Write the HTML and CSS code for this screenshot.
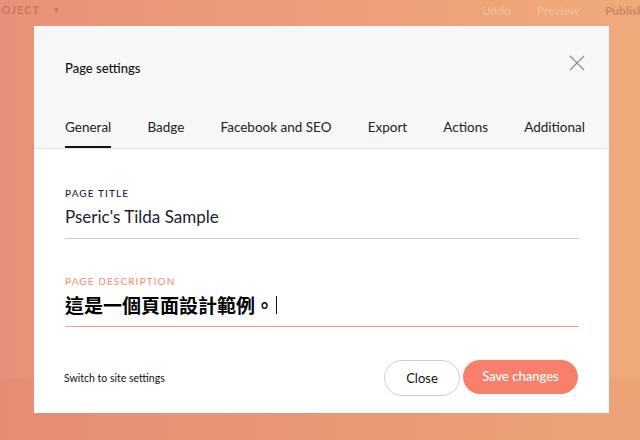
FILE: index.html
```html
<!DOCTYPE html>
<html lang="en">
<head>
<meta charset="utf-8">
<title>Page settings</title>
<link rel="stylesheet" href="styles.css">
</head>
<body>
<div class="topbar">
  <div class="tb-left"><span class="project">PROJECT</span><span class="caret">▾</span></div>
  <div class="tb-right"><span class="undo">Undo</span><span class="preview">Preview</span><span class="publish">Publish</span></div>
</div>
<div class="modal">
  <div class="modal-head">
    <div class="title-row">
      <div class="title">Page settings</div>
      <svg class="close-x" width="16" height="16" viewBox="0 0 16 16"><path d="M1 1L15 15M15 1L1 15" stroke="#8a8a8a" stroke-width="1.1" fill="none"/></svg>
    </div>
    <div class="tabs">
      <div class="tab active">General</div>
      <div class="tab">Badge</div>
      <div class="tab">Facebook and SEO</div>
      <div class="tab">Export</div>
      <div class="tab">Actions</div>
      <div class="tab">Additional</div>
    </div>
  </div>
  <div class="modal-body">
    <div class="field">
      <div class="label">PAGE TITLE</div>
      <div class="input">Pseric's Tilda Sample</div>
    </div>
    <div class="field focus">
      <div class="label">PAGE DESCRIPTION</div>
      <div class="input cjk">這是一個頁面設計範例。<span class="cursor"></span></div>
    </div>
  </div>
  <div class="modal-foot">
    <div class="switch">Switch to site settings</div>
    <div class="buttons">
      <div class="btn btn-close">Close</div>
      <div class="btn btn-save">Save changes</div>
    </div>
  </div>
</div>
</body>
</html>
```
FILE: styles.css
```css
html, body {
  margin: 0;
  padding: 0;
}
body {
  width: 640px;
  height: 440px;
  overflow: hidden;
  font-family: Lato, "Noto Sans", sans-serif;
  background:
    linear-gradient(to bottom, rgba(0,0,0,0) 378px, rgba(170,50,30,0.05) 378px),
    linear-gradient(to right, #e8917a 0%, #eda07b 60%, #f0aa7b 100%);
}
.topbar {
  height: 26px;
  display: flex;
  justify-content: space-between;
  align-items: flex-start;
  padding-top: 3px;
  box-sizing: border-box;
  font-size: 11px;
}
.tb-left {
  display: flex;
  align-items: center;
  margin-left: -14px;
  color: rgba(170,80,60,0.45);
  font-weight: 700;
  letter-spacing: 1px;
}
.caret {
  margin-left: 14px;
  font-size: 9px;
}
.tb-right {
  display: flex;
  gap: 26px;
  margin-right: -4px;
}
.undo, .preview {
  color: rgba(255,225,200,0.45);
  font-size: 12px;
}
.publish {
  color: rgba(150,80,55,0.4);
  font-weight: 700;
  font-size: 12px;
}
.modal {
  margin-left: 34px;
  width: 575px;
  height: 387px;
  background: #fff;
  display: flex;
  flex-direction: column;
}
.modal-head {
  background: #f7f7f7;
  border-bottom: 1px solid #e6e6e6;
  padding: 32px 24px 0 31px;
}
.title-row {
  display: flex;
  justify-content: space-between;
  align-items: flex-start;
  height: 20px;
}
.title {
  font-size: 13px;
  line-height: 20px;
  font-weight: 500;
  color: #111;
}
.close-x {
  margin-top: -3px;
}
.tabs {
  margin-top: 39px;
  display: flex;
  justify-content: space-between;
}
.tab {
  font-size: 13.5px;
  line-height: 20px;
  padding-bottom: 9px;
  border-bottom: 2px solid transparent;
  color: #222;
  font-weight: 400;
}
.tab.active {
  border-bottom-color: #111;
}
.modal-body {
  padding: 37px 30px 0 31px;
  display: flex;
  flex-direction: column;
  gap: 35px;
}
.field {
  display: flex;
  flex-direction: column;
}
.label {
  font-size: 10px;
  line-height: 14px;
  letter-spacing: 1.1px;
  color: #1d1d3a;
  font-weight: 500;
}
.field.focus .label {
  color: #f7907a;
}
.input {
  margin-top: 5px;
  font-size: 17px;
  line-height: 24px;
  font-weight: 400;
  color: #1c1c30;
  padding-bottom: 9px;
  border-bottom: 1px solid #c9c9c9;
}
.input.cjk {
  margin-top: 4px;
  font-family: "Noto Sans CJK TC", "Noto Sans CJK SC", sans-serif;
  font-size: 19px;
  line-height: 26px;
  font-weight: 700;
  color: #000;
  padding-bottom: 8px;
  border-bottom-color: #f59e84;
  display: flex;
  align-items: center;
}
.cursor {
  display: inline-block;
  width: 1px;
  height: 18px;
  background: #111;
  margin-left: 2px;
}
.modal-foot {
  margin-top: 33px;
  padding: 0 31px 0 30px;
  display: flex;
  justify-content: space-between;
  align-items: center;
}
.switch {
  font-size: 10.5px;
  color: #111;
}
.buttons {
  display: flex;
  gap: 3px;
  align-items: flex-start;
}
.btn {
  display: flex;
  align-items: center;
  justify-content: center;
  box-sizing: border-box;
  font-size: 13px;
}
.btn-close {
  width: 76px;
  height: 36px;
  border: 1px solid #cfcfcf;
  border-radius: 18px;
  color: #111;
  background: #fff;
}
.btn-save {
  width: 115px;
  height: 34px;
  padding-bottom: 3px;
  border-radius: 17px;
  background: #f8806a;
  color: #fff;
  font-weight: 500;
}
```
